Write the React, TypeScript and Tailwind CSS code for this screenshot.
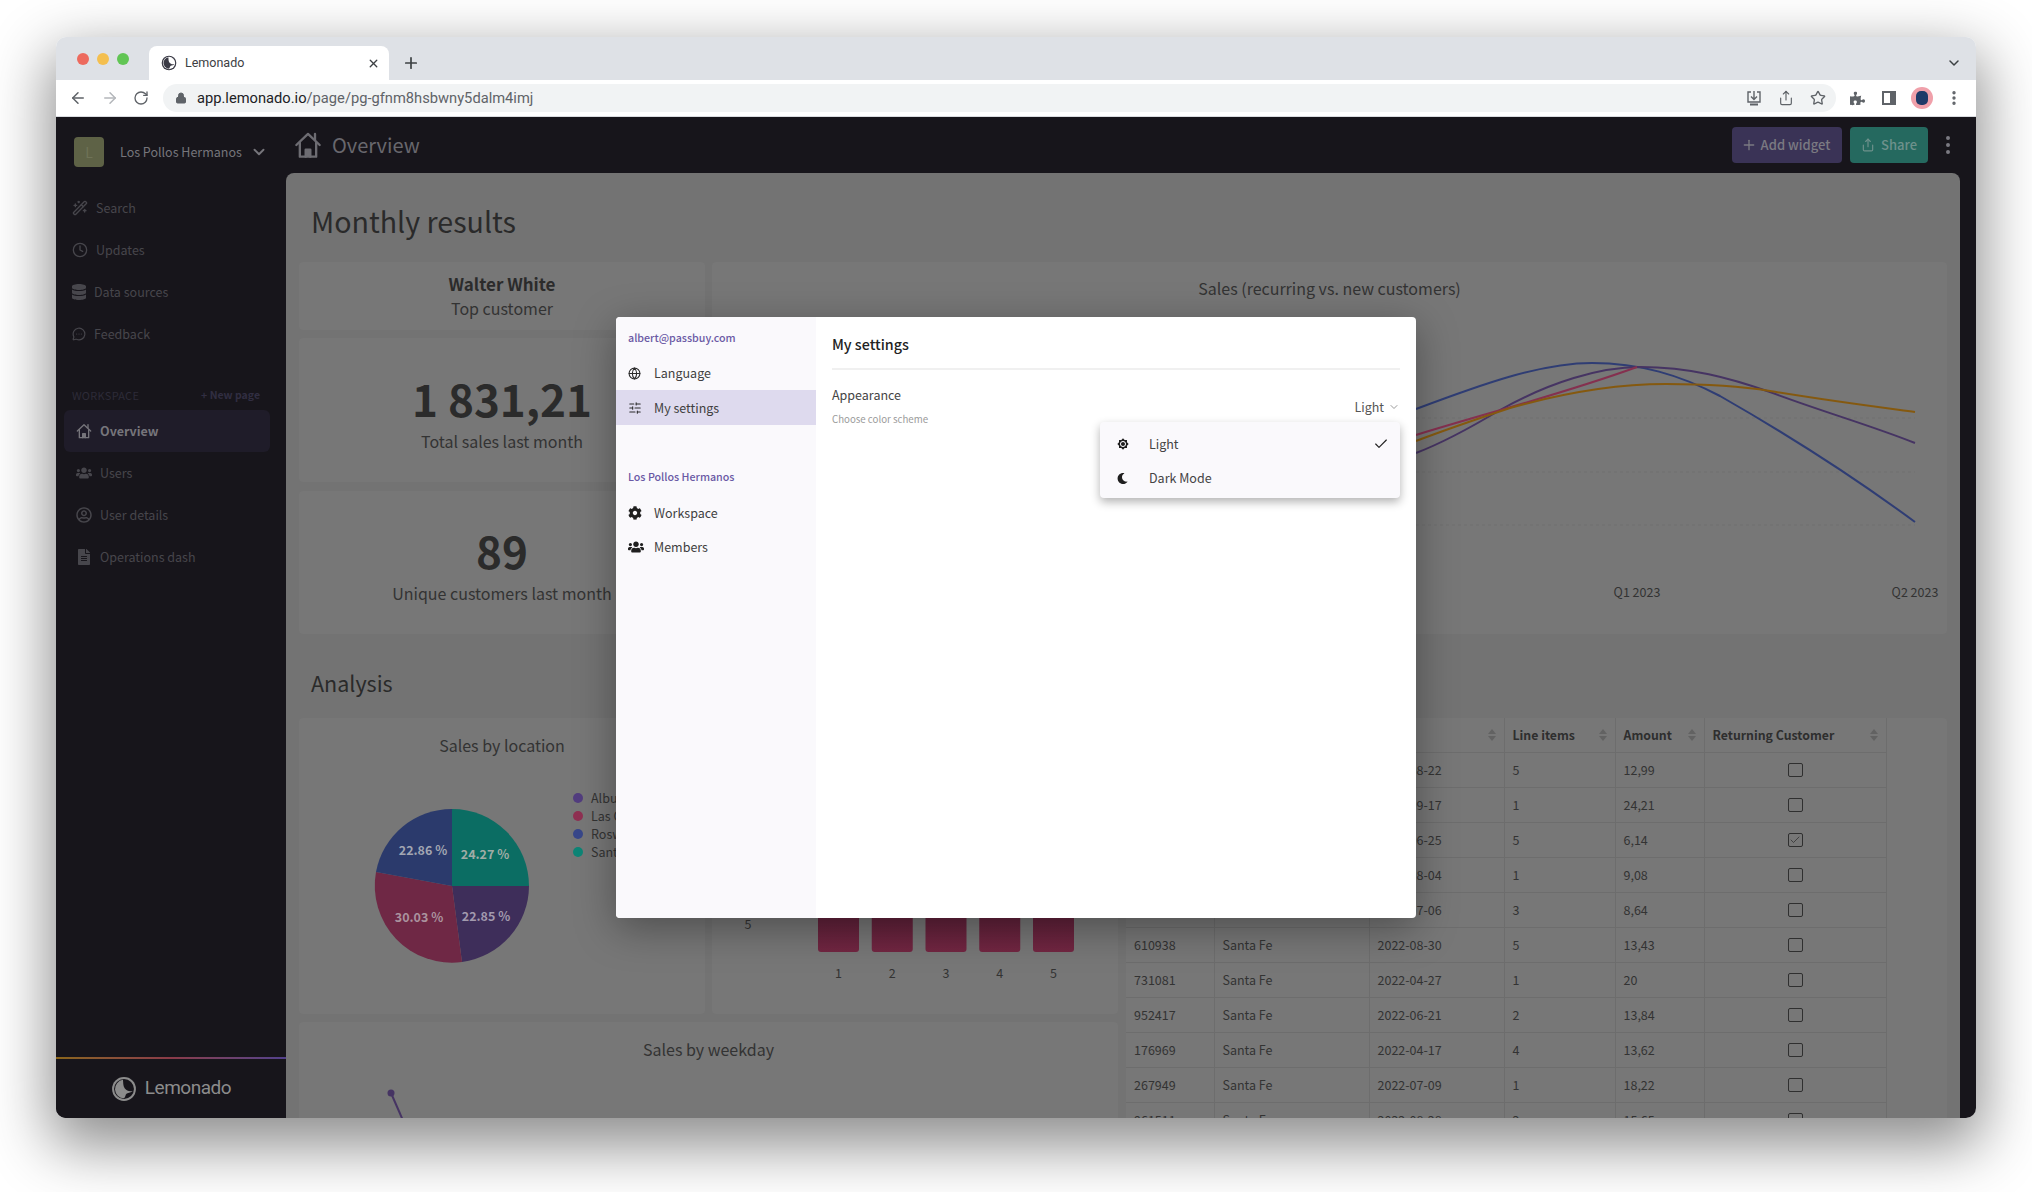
import { Check, ChevronDown, Globe, Plus, SlidersHorizontal, WandSparkles, Clock, MessageCircleMore, X, ArrowLeft, ArrowRight, RotateCw, Lock, Star, EllipsisVertical, Share } from "lucide-react";
import { FaCog, FaDatabase, FaFileAlt, FaRegUserCircle, FaUsers, FaPuzzlePiece, FaMoon } from "react-icons/fa";
import { FiShare } from "react-icons/fi";
import { MdBrightness7 } from "react-icons/md";

function HomeIcon({ className }: { className?: string }) {
    return (
        <svg className={className} viewBox="0 0 24 24" fill="none" stroke="currentColor" strokeWidth={2} strokeLinejoin="round" strokeLinecap="round">
            <path d="M2 12 12 2.5 22 12" />
            <path d="M5 10v12h14V10" />
            <path d="M10 22v-6h4v6" fill="currentColor" />
            <path d="M18 7V2.5" />
        </svg>
    );
}

function LemonadoLogo({ className, fg, bg }: { className?: string; fg: string; bg: string }) {
    return (
        <svg className={className} viewBox="0 0 24 24">
            <circle cx="12" cy="12" r="11" fill={fg} />
            <circle cx="12" cy="12" r="9.2" fill={bg} />
            <path d="M11 3.5A8.6 8.6 0 0 0 12 20.6c1.5-1 1-3.4 2.6-4.4 1.8-1 4-.6 5.4-2.4-2.6.6-5.6.2-7.4-2.4C11 9 11.4 6 11 3.5Z" fill={fg} />
        </svg>
    );
}

const mainNav = [
    { label: "Search", icon: <WandSparkles className="w-4 h-4" /> },
    { label: "Updates", icon: <Clock className="w-4 h-4" /> },
    { label: "Data sources", icon: <FaDatabase className="w-[14px] h-4" /> },
    { label: "Feedback", icon: <MessageCircleMore className="w-[14px] h-[14px]" /> },
];

const workspaceNav = [
    { label: "Users", icon: <FaUsers className="w-4 h-4" /> },
    { label: "User details", icon: <FaRegUserCircle className="w-4 h-4" /> },
    { label: "Operations dash", icon: <FaFileAlt className="w-4 h-4" /> },
];

function Sidebar() {
    return (
        <aside className="w-[230px] shrink-0 flex flex-col bg-[#17151b]">
            <div className="h-[70px] pl-[18px] flex items-center">
                <div className="w-[30px] h-[30px] shrink-0 rounded bg-[#5e6246] flex items-center justify-center text-sm text-[#6f7357]">L</div>
                <span className="ml-[16px] text-[12.5px] text-[#76757b] whitespace-nowrap">Los Pollos Hermanos</span>
                <ChevronDown className="ml-[8px] w-[18px] h-[18px] shrink-0 text-[#76757b]" strokeWidth={2.5} />
            </div>
            {mainNav.map((item) => (
                <div key={item.label} className="h-[42px] pl-4 flex items-center gap-2 text-[12.5px] text-[#47464c]">
                    {item.icon}
                    <span>{item.label}</span>
                </div>
            ))}
            <div className="mt-[28px] h-6 pl-4 pr-[26px] flex items-center justify-between">
                <span className="text-[11px] text-[#2d2b38] tracking-wide">WORKSPACE</span>
                <span className="text-[10.5px] font-bold text-[#312e42]">+ New page</span>
            </div>
            <div className="mt-[3px] ml-2 mr-4 h-[42px] pl-3 flex items-center gap-2 rounded-md bg-[#1f1c29] text-[12.5px] font-bold text-[#76757b]">
                <HomeIcon className="w-4 h-4" />
                <span>Overview</span>
            </div>
            {workspaceNav.map((item) => (
                <div key={item.label} className="mx-2 h-[42px] pl-3 flex items-center gap-2 text-[12.5px] text-[#47464c]">
                    {item.icon}
                    <span>{item.label}</span>
                </div>
            ))}
            <div className="mt-auto h-[2px] bg-gradient-to-r from-[#8a6518] via-[#8a3a48] to-[#52408c]" />
            <div className="h-[59px] flex items-center justify-center gap-2">
                <LemonadoLogo className="w-[26px] h-[26px]" fg="#8c8c8c" bg="#17151b" />
                <span className="font-['Roboto',sans-serif] text-[19px] tracking-tight text-[#8c8c8c]">Lemonado</span>
            </div>
        </aside>
    );
}

function TopBar() {
    return (
        <div className="h-[56px] shrink-0 pl-2 flex items-center bg-[#17151b]">
            <HomeIcon className="w-[28px] h-[28px] text-[#6d6c72]" />
            <span className="ml-[10px] text-[20px] text-[#68676d]">Overview</span>
            <div className="ml-auto flex items-center">
                <div className="w-[110px] h-9 pr-[3px] rounded flex items-center justify-center gap-[4px] bg-[#3a3356] text-[13px] font-medium text-[#7b7a82]">
                    <Plus className="w-4 h-4" />
                    Add widget
                </div>
                <div className="ml-2 w-[78px] h-9 rounded flex items-center justify-center gap-[6px] bg-[#25695f] text-[13px] font-medium text-[#6e918c]">
                    <FiShare className="w-[14px] h-[14px]" />
                    Share
                </div>
                <EllipsisVertical className="ml-[8px] w-6 h-6 text-[#7b7a82]" />
            </div>
        </div>
    );
}

function Card({ className, children }: { className?: string; children?: React.ReactNode }) {
    return <div className={`bg-[#777777] rounded ${className ?? ""}`}>{children}</div>;
}

function SalesChart() {
    return (
        <svg width="1235" height="324" viewBox="712 310 1235 324" fill="none">
            {[418, 472, 525].map((y) => (
                <line key={y} x1="720" x2="1915" y1={y} y2={y} stroke="#707070" strokeDasharray="3 3" />
            ))}
            <path d="M1416 409C1480 385 1540 363 1592 363C1640 363 1680 375 1720 396C1790 436 1850 474 1915 522" stroke="#2f3d74" strokeWidth="2" />
            <path d="M1416 453C1450 440 1480 422 1500 410C1550 382 1600 367 1640 367C1690 367 1730 378 1770 392C1820 411 1870 425 1915 443" stroke="#463463" strokeWidth="2" />
            <path d="M1416 435C1490 412 1560 395 1637 367" stroke="#85304f" strokeWidth="2" />
            <path d="M1416 441C1450 428 1480 418 1510 408C1570 391 1620 384 1666 384C1710 384 1740 386 1770 391C1830 401 1870 406 1915 412" stroke="#85590f" strokeWidth="2" />
            <text x="1637" y="597" textAnchor="middle" fontSize="12.5" fill="#333333">Q1 2023</text>
            <text x="1915" y="597" textAnchor="middle" fontSize="12.5" fill="#333333">Q2 2023</text>
        </svg>
    );
}

function PieChart() {
    const legend = [
        { label: "Albuquerque", color: "#523d7f", y: 798 },
        { label: "Las Cruces", color: "#8f3052", y: 816 },
        { label: "Roswell", color: "#38478a", y: 834 },
        { label: "Santa Fe", color: "#0e8576", y: 852 },
    ];
    return (
        <svg width="406" height="254" viewBox="299 760 406 254">
            <path d="M452 886V809A77 77 0 0 1 529 886Z" fill="#0b6d63" />
            <path d="M452 886H529A77 77 0 0 1 462 962Z" fill="#3e2e5a" />
            <path d="M452 886L462 962A77 77 0 0 1 376 872Z" fill="#6f2845" />
            <path d="M452 886L376 872A77 77 0 0 1 452 809Z" fill="#2b3a6c" />
            <text x="485" y="859" textAnchor="middle" fontSize="12.5" fontWeight="700" fill="#a0aca6">24.27 %</text>
            <text x="423" y="855" textAnchor="middle" fontSize="12.5" fontWeight="700" fill="#a2a6b2">22.86 %</text>
            <text x="419" y="922" textAnchor="middle" fontSize="12.5" fontWeight="700" fill="#aa929e">30.03 %</text>
            <text x="486" y="921" textAnchor="middle" fontSize="12.5" fontWeight="700" fill="#a29aae">22.85 %</text>
            {legend.map((l) => (
                <g key={l.label}>
                    <circle cx="578" cy={l.y} r="5" fill={l.color} />
                    <text x="591" y={l.y + 5} fontSize="12.5" fill="#333333">{l.label}</text>
                </g>
            ))}
        </svg>
    );
}

function BarChart() {
    const bars = [818, 871.75, 925.5, 979.25, 1033];
    return (
        <svg width="406" height="296" viewBox="712 718 406 296">
            <defs>
                <linearGradient id="bar" x1="0" y1="0" x2="0" y2="1">
                    <stop offset="0" stopColor="#4e1c32" />
                    <stop offset="1" stopColor="#722642" />
                </linearGradient>
            </defs>
            <text x="748" y="929" textAnchor="middle" fontSize="12.5" fill="#333333">5</text>
            {bars.map((x, i) => (
                <g key={x}>
                    <rect x={x} y="880" width="41" height="72" rx="3" fill="url(#bar)" />
                    <text x={x + 20.5} y="978" textAnchor="middle" fontSize="12.5" fill="#333333">{i + 1}</text>
                </g>
            ))}
        </svg>
    );
}

const rows = [
    ["", "", "2022-08-22", "5", "12,99", false],
    ["", "", "2022-09-17", "1", "24,21", false],
    ["", "", "2022-06-25", "5", "6,14", true],
    ["", "", "2022-08-04", "1", "9,08", false],
    ["", "", "2022-07-06", "3", "8,64", false],
    ["610938", "Santa Fe", "2022-08-30", "5", "13,43", false],
    ["731081", "Santa Fe", "2022-04-27", "1", "20", false],
    ["952417", "Santa Fe", "2022-06-21", "2", "13,84", false],
    ["176969", "Santa Fe", "2022-04-17", "4", "13,62", false],
    ["267949", "Santa Fe", "2022-07-09", "1", "18,22", false],
    ["961511", "Santa Fe", "2022-08-28", "2", "15,65", false],
] as const;

function SortIcon() {
    return (
        <svg className="w-2 h-3 text-[#626262]" viewBox="0 0 8 12" fill="currentColor">
            <path d="M4 0 8 5H0Z" />
            <path d="M4 12 0 7H8Z" />
        </svg>
    );
}

function HeaderCell({ label }: { label: string }) {
    return (
        <th className="h-[34px] px-2 border-r border-b border-[#6d6d6d] text-left text-[12.3px] font-bold text-[#2e2e2e]">
            <div className="flex items-center justify-between">
                <span>{label}</span>
                <SortIcon />
            </div>
        </th>
    );
}

function OrdersTable() {
    return (
        <table className="w-[760px] table-fixed border-collapse">
            <colgroup>
                <col className="w-[88px]" />
                <col className="w-[155px]" />
                <col className="w-[135px]" />
                <col className="w-[111px]" />
                <col className="w-[89px]" />
                <col className="w-[182px]" />
            </colgroup>
            <thead>
                <tr>
                    <HeaderCell label="Order ID" />
                    <HeaderCell label="Location" />
                    <HeaderCell label="Date" />
                    <HeaderCell label="Line items" />
                    <HeaderCell label="Amount" />
                    <HeaderCell label="Returning Customer" />
                </tr>
            </thead>
            <tbody>
                {rows.map((row, i) => (
                    <tr key={i} className="h-[35px] text-[12.5px] text-[#333333]">
                        {row.slice(0, 5).map((cell, j) => (
                            <td key={j} className="px-2 pt-[2px] border-r border-b border-[#6d6d6d] leading-none">{cell as string}</td>
                        ))}
                        <td className="border-r border-b border-[#6d6d6d]">
                            <div className="mx-auto w-[15px] h-[14px] rounded-[2px] border border-[#2f2f2f] flex items-center justify-center">
                                {row[5] && <Check className="w-3 h-3 text-[#2f2f2f]" strokeWidth={1.5} />}
                            </div>
                        </td>
                    </tr>
                ))}
            </tbody>
        </table>
    );
}

function Dashboard() {
    return (
        <main className="flex-1 min-h-0 overflow-hidden rounded-t-lg bg-[#737373] px-[13px] text-[#2b2b2b]">
            <h1 className="h-[89px] pt-[7px] pl-3 flex items-center text-[28.6px] text-[#2a2a2a]">Monthly results</h1>
            <div className="flex gap-[7px] h-[372px]">
                <div className="w-[406px] shrink-0 flex flex-col">
                    <Card className="h-[68px] pt-[9px] text-center">
                        <div className="text-[17px] leading-[25px] font-bold">Walter White</div>
                        <div className="text-base leading-6 text-[#333333]">Top customer</div>
                    </Card>
                    <Card className="mt-2 h-[144px] pt-[32px] text-center">
                        <div className="text-[44px] leading-[56px] font-bold">1 831,21</div>
                        <div className="mt-[3px] text-base leading-6 text-[#333333]">Total sales last month</div>
                    </Card>
                    <Card className="mt-[9px] flex-1 pt-[31px] text-center">
                        <div className="text-[44px] leading-[56px] font-bold">89</div>
                        <div className="mt-[3px] text-base leading-6 text-[#333333]">Unique customers last month</div>
                    </Card>
                </div>
                <Card className="flex-1 pt-[14px]">
                    <div className="text-center text-base leading-6 text-[#333333]">Sales (recurring vs. new customers)</div>
                    <div className="mt-[10px]">
                        <SalesChart />
                    </div>
                </Card>
            </div>
            <h2 className="h-[84px] pt-[14px] pl-3 flex items-center text-[21.5px] text-[#2a2a2a]">Analysis</h2>
            <div className="flex gap-2">
                <div className="w-[819px] shrink-0 flex flex-col gap-2">
                    <div className="flex gap-[7px]">
                        <Card className="w-[406px] h-[296px] pt-[15px]">
                            <div className="text-center text-base leading-6 text-[#333333]">Sales by location</div>
                            <div className="mt-[3px]">
                                <PieChart />
                            </div>
                        </Card>
                        <Card className="w-[406px] h-[296px]">
                            <BarChart />
                        </Card>
                    </div>
                    <Card className="h-[200px] pt-[15px]">
                        <div className="text-center text-base leading-6 text-[#333333]">Sales by weekday</div>
                        <svg className="mt-[1px]" width="819" height="120" viewBox="299 1062 819 120" fill="none">
                            <circle cx="391" cy="1093" r="3.5" fill="#463463" />
                            <path d="M391 1093 405 1125" stroke="#463463" strokeWidth="2" />
                            <text x="331" y="1128" textAnchor="middle" fontSize="12.5" fill="#333333">220</text>
                        </svg>
                    </Card>
                </div>
                <Card className="flex-1 h-[500px]">
                    <OrdersTable />
                </Card>
            </div>
        </main>
    );
}

function SettingsModal() {
    return (
        <div className="absolute left-[560px] top-[200px] w-[800px] h-[601px] flex rounded bg-white shadow-[0_10px_40px_rgba(0,0,0,0.35)] overflow-visible">
            <div className="w-[200px] rounded-l bg-[#faf9fc] pt-[12px] text-[12.5px] text-[#3f3f3f]">
                <div className="h-[18px] pl-3 flex items-center text-[10.7px] font-medium text-[#6a5aa5]">albert@passbuy.com</div>
                <div className="mt-[9px] h-[34px] pl-3 flex items-center gap-[13px]">
                    <Globe className="w-[13px] h-[13px] text-[#2b2b2b]" />
                    Language
                </div>
                <div className="h-[35px] pl-3 pt-[1px] flex items-center gap-[12px] bg-[#dedaee]">
                    <SlidersHorizontal className="w-[14px] h-[14px] text-[#2b2b2b]" strokeWidth={1.75} />
                    My settings
                </div>
                <div className="mt-[43px] h-[18px] pl-3 flex items-center text-[10.7px] font-medium text-[#6a5aa5]">Los Pollos Hermanos</div>
                <div className="mt-[10px] h-[34px] pl-3 flex items-center gap-[12px]">
                    <FaCog className="w-[14px] h-[14px] text-[#1f1f1f]" />
                    Workspace
                </div>
                <div className="h-[34px] pl-3 flex items-center gap-[10px]">
                    <FaUsers className="w-[16px] h-[16px] text-[#1f1f1f]" />
                    Members
                </div>
            </div>
            <div className="relative flex-1 px-4">
                <div className="h-[53px] pt-[3px] flex items-center border-b-2 border-[#f0f0f0] text-[14.3px] font-medium text-[#222222]">My settings</div>
                <div className="mt-[15px] text-[12.5px] leading-5 text-[#444444]">Appearance</div>
                <div className="mt-[6px] text-[9.7px] leading-4 text-[#9a9a9a]">Choose color scheme</div>
                <div className="absolute right-4 top-[80px] flex items-center gap-1 text-[12.5px] leading-5 text-[#555555]">
                    Light
                    <ChevronDown className="w-3 h-3 text-[#9a9a9a]" />
                </div>
                <div className="absolute right-4 top-[105px] w-[300px] h-[76px] pt-[5px] rounded bg-[#faf9fc] shadow-[0_4px_10px_rgba(0,0,0,0.3)] text-[12.5px] text-[#444444]">
                    <div className="h-[34px] pl-[17px] pr-[11px] flex items-center">
                        <MdBrightness7 className="w-3 h-3 text-[#1f1f1f]" />
                        <span className="ml-[20px]">Light</span>
                        <Check className="ml-auto w-4 h-4 text-[#222222]" strokeWidth={1.75} />
                    </div>
                    <div className="h-[34px] pl-[17px] flex items-center">
                        <FaMoon className="w-[11px] h-[11px] text-[#1f1f1f]" />
                        <span className="ml-[21px]">Dark Mode</span>
                    </div>
                </div>
            </div>
        </div>
    );
}

function BrowserChrome() {
    return (
        <div className="font-['Roboto',sans-serif]">
            <div className="h-[43px] bg-[#dee1e6] flex items-end relative">
                <div className="pl-[21px] pb-[15px] flex gap-2">
                    <span className="w-3 h-3 rounded-full bg-[#ed6a5e]" />
                    <span className="w-3 h-3 rounded-full bg-[#f4bf4f]" />
                    <span className="w-3 h-3 rounded-full bg-[#61c554]" />
                </div>
                <div className="ml-[20px] w-[240px] h-[34px] rounded-t-lg bg-white pl-3 pr-[9px] flex items-center">
                    <LemonadoLogo className="w-4 h-4" fg="#3b3b46" bg="#ffffff" />
                    <span className="ml-2 text-[12.5px] text-[#3c4043]">Lemonado</span>
                    <X className="ml-auto w-[13px] h-[13px] text-[#3c4043]" strokeWidth={2.5} />
                </div>
                <Plus className="ml-[13px] mb-[8px] w-[18px] h-[18px] text-[#3c4043]" strokeWidth={2.25} />
                <ChevronDown className="ml-auto mr-[14px] mb-[9px] w-4 h-4 text-[#3c4043]" strokeWidth={2.25} />
            </div>
            <div className="h-[37px] bg-white border-b border-[#dadce0] flex items-center pl-[13px]">
                <ArrowLeft className="w-[18px] h-[18px] text-[#5f6368]" />
                <ArrowRight className="ml-[14px] w-[18px] h-[18px] text-[#b4b7bb]" />
                <RotateCw className="ml-[14px] w-4 h-4 text-[#5f6368]" />
                <div className="ml-[14px] w-[1673px] h-7 rounded-full bg-[#f1f3f4] flex items-center pl-3 pr-[10px]">
                    <Lock className="w-3 h-3 text-[#5f6368]" fill="#5f6368" />
                    <span className="ml-[10px] text-[14.7px] text-[#202124]">app.lemonado.io</span>
                    <span className="text-[14.7px] text-[#5f6368]">/page/pg-gfnm8hsbwny5dalm4imj</span>
                    <div className="ml-auto flex items-center gap-4 text-[#5f6368]">
                        <svg className="w-4 h-4" viewBox="0 0 16 16" fill="none" stroke="currentColor" strokeWidth="1.4">
                            <path d="M5 2H2v10h12V2h-3" />
                            <path d="M8 1v8M5 6.5 8 9.5 11 6.5" />
                            <path d="M4 14.5h8" strokeWidth="2" />
                        </svg>
                        <Share className="w-4 h-4" strokeWidth={1.75} />
                        <Star className="w-4 h-4" strokeWidth={2} />
                    </div>
                </div>
                <FaPuzzlePiece className="ml-[14px] w-[15px] h-[15px] text-[#5f6368]" />
                <svg className="ml-[17px] w-[14px] h-[14px] text-[#5f6368]" viewBox="0 0 14 14">
                    <path d="M0 0H14V14H0ZM2 2V12H8V2Z" fill="currentColor" fillRule="evenodd" />
                </svg>
                <div className="ml-[15px] w-[22px] h-[22px] rounded-full bg-[#f0a0aa] flex items-center justify-center">
                    <span className="w-3 h-[14px] rounded-[5px] bg-[#1f3a68]" />
                </div>
                <EllipsisVertical className="ml-[12px] w-[18px] h-[18px] text-[#5f6368]" strokeWidth={2.5} />
            </div>
        </div>
    );
}

export default function App() {
    return (
        <div className="w-[2032px] h-[1192px] pt-[37px] pl-[56px] bg-white font-['Noto_Sans_CJK_SC',sans-serif] overflow-hidden">
            <div className="w-[1920px] h-[1081px] flex flex-col rounded-[10px] overflow-hidden shadow-[0_22px_60px_6px_rgba(0,0,0,0.45)]">
                <BrowserChrome />
                <div className="relative flex-1 min-h-0 flex bg-[#17151b]">
                    <Sidebar />
                    <div className="flex-1 min-w-0 flex flex-col pr-4">
                        <TopBar />
                        <Dashboard />
                    </div>
                    <SettingsModal />
                </div>
            </div>
        </div>
    );
}
